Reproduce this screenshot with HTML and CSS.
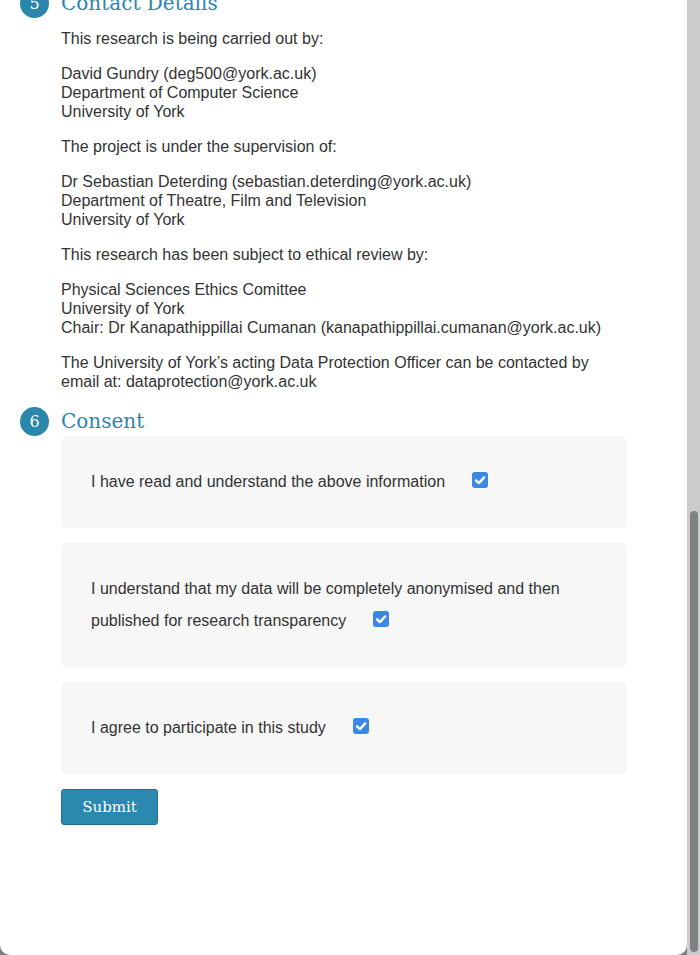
FILE: index.html
```html
<!DOCTYPE html>
<html lang="en">
<head>
<meta charset="utf-8">
<title>Participant Information Sheet</title>
<link rel="stylesheet" href="styles.css">
</head>
<body>
<main class="sheet">
  <div class="earlier-sections" aria-hidden="true"></div>

  <section class="section">
    <h2 class="section-title"><span class="num">5</span>Contact Details</h2>
    <div class="section-body">
      <p class="first">This research is being carried out by:</p>
      <p>David Gundry (deg500@york.ac.uk)<br>Department of Computer Science<br>University of York</p>
      <p>The project is under the supervision of:</p>
      <p>Dr Sebastian Deterding (sebastian.deterding@york.ac.uk)<br>Department of Theatre, Film and Television<br>University of York</p>
      <p>This research has been subject to ethical review by:</p>
      <p>Physical Sciences Ethics Comittee<br>University of York<br>Chair: Dr Kanapathippillai Cumanan (kanapathippillai.cumanan@york.ac.uk)</p>
      <p>The University of York’s acting Data Protection Officer can be contacted by email at: dataprotection@york.ac.uk</p>
    </div>
  </section>

  <section class="section">
    <h2 class="section-title"><span class="num">6</span>Consent</h2>
    <form class="section-body consent-form">
      <div class="consent-item">
        <label>I have read and understand the above information<span class="check"><svg width="16" height="16" viewBox="0 0 16 16"><rect width="16" height="16" rx="3" fill="#3b87e4"/><path d="M4 8.3 L6.9 11.1 L12.2 5.4" fill="none" stroke="#fff" stroke-width="2.4" stroke-linecap="round" stroke-linejoin="round"/></svg></span></label>
      </div>
      <div class="consent-item">
        <label>I understand that my data will be completely anonymised and then published for research transparency<span class="check"><svg width="16" height="16" viewBox="0 0 16 16"><rect width="16" height="16" rx="3" fill="#3b87e4"/><path d="M4 8.3 L6.9 11.1 L12.2 5.4" fill="none" stroke="#fff" stroke-width="2.4" stroke-linecap="round" stroke-linejoin="round"/></svg></span></label>
      </div>
      <div class="consent-item">
        <label>I agree to participate in this study<span class="check"><svg width="16" height="16" viewBox="0 0 16 16"><rect width="16" height="16" rx="3" fill="#3b87e4"/><path d="M4 8.3 L6.9 11.1 L12.2 5.4" fill="none" stroke="#fff" stroke-width="2.4" stroke-linecap="round" stroke-linejoin="round"/></svg></span></label>
      </div>
      <button type="button" class="submit">Submit</button>
    </form>
  </section>
</main>
<div class="scrollbar" aria-hidden="true"><div class="scroll-thumb" id="thumb"></div></div>
<script src="script.js"></script>
</body>
</html>
```

FILE: styles.css
```css
html {
  scrollbar-width: none;
}
::-webkit-scrollbar {
  width: 0;
  height: 0;
}

html, body {
  margin: 0;
  padding: 0;
}

body {
  background: #808080;
  font-family: "Liberation Sans", Arial, sans-serif;
  font-size: 16px;
  color: #333333;
}

.sheet {
  background: #ffffff;
  border-radius: 10px;
  margin-right: 13px;
  padding: 0 60px 130px 20px;
}

.earlier-sections {
  height: 1096px;
}

.scrollbar {
  position: fixed;
  top: 0;
  right: 0;
  bottom: 0;
  width: 13px;
  background: #cbcbcb;
}

.scroll-thumb {
  position: absolute;
  left: 3px;
  right: 2px;
  top: 510px;
  height: 442px;
  background: #7d8183;
  border-radius: 4px;
}

.section-title {
  display: flex;
  align-items: center;
  gap: 12px;
  margin: 0;
  height: 29px;
  font-family: "DejaVu Serif", Georgia, serif;
  font-weight: normal;
  font-size: 20px;
  line-height: 29px;
  color: #2a86ad;
}

.num {
  display: flex;
  align-items: center;
  justify-content: center;
  width: 29px;
  height: 29px;
  border-radius: 50%;
  background: #2a86ab;
  color: #ffffff;
  font-size: 16px;
  line-height: 1;
}

.section-body {
  margin-left: 41px;
}

.section-body p {
  margin: 0 0 16px;
  line-height: 19px;
}

.section-body p.first {
  margin-top: 11px;
}

.consent-form {
  display: block;
}

.consent-item {
  background: #f7f7f7;
  border-radius: 5px;
  padding: 30px;
  line-height: 32px;
  margin-bottom: 15px;
}

.consent-item label {
  display: block;
}

.check {
  display: inline-block;
  width: 16px;
  height: 16px;
  margin-left: 27px;
  vertical-align: -1px;
}

.check svg {
  display: block;
}

.submit {
  display: block;
  width: 97px;
  height: 36px;
  padding: 0;
  margin: 0;
  background: #2b88ae;
  border: 1px solid #21708f;
  border-radius: 3px;
  color: #ffffff;
  font-family: "DejaVu Serif", Georgia, serif;
  font-size: 15px;
  line-height: 34px;
  cursor: pointer;
}
```

FILE: script.js
```js
function updateThumb() {
  var doc = document.documentElement;
  var view = window.innerHeight;
  var total = doc.scrollHeight;
  var track = view - 3;
  var thumbH = Math.max(20, Math.round(track * view / total));
  var maxScroll = Math.max(1, total - view);
  var top = Math.round((window.scrollY / maxScroll) * (track - thumbH));
  var thumb = document.getElementById('thumb');
  thumb.style.height = thumbH + 'px';
  thumb.style.top = top + 'px';
}
function toBottom() {
  window.scrollTo(0, document.documentElement.scrollHeight);
  updateThumb();
}
toBottom();
window.addEventListener('load', toBottom);
window.addEventListener('scroll', updateThumb);
```
